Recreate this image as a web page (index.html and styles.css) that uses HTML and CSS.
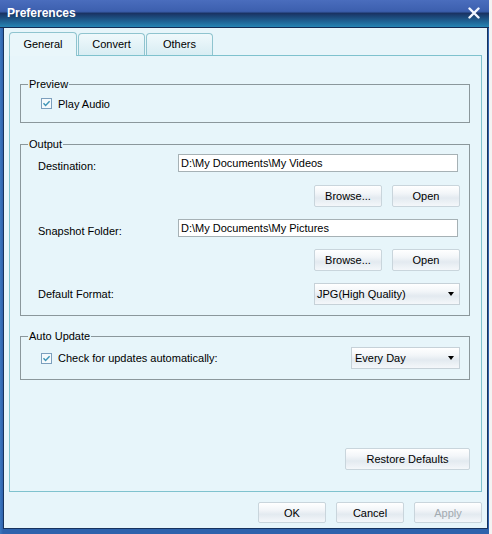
FILE: index.html
```html
<!DOCTYPE html>
<html>
<head>
<meta charset="utf-8">
<title>Preferences</title>
<link rel="stylesheet" href="styles.css">
</head>
<body>
<div class="window">
  <div class="titlebar">
    <span class="title">Preferences</span>
    <svg class="close" width="12" height="12" viewBox="0 0 12 12"><path d="M1.5 1.5 L10.5 10.5 M10.5 1.5 L1.5 10.5" stroke="#f2f6ff" stroke-width="2.4" stroke-linecap="round"/></svg>
  </div>
  <div class="frame">
    <div class="client">
      <div class="tabs">
        <div class="tab active">General</div>
        <div class="tab">Convert</div>
        <div class="tab">Others</div>
      </div>
      <div class="panel">
        <fieldset class="group preview">
          <legend>Preview</legend>
          <div class="check-row">
            <span class="box"><svg width="9" height="9" viewBox="0 0 9 9"><path d="M1.5 4.2 L3.6 6.4 L7.6 2.2" fill="none" stroke="#3d94b6" stroke-width="1.4"/></svg></span>
            <span>Play Audio</span>
          </div>
        </fieldset>
        <fieldset class="group output">
          <legend>Output</legend>
          <div class="out-grid">
            <span class="lbl lbl-top">Destination:</span>
            <div class="field first">D:\My Documents\My Videos</div>
            <div class="btns"><button class="btn">Browse...</button><button class="btn">Open</button></div>
            <span class="lbl lbl-top">Snapshot Folder:</span>
            <div class="field">D:\My Documents\My Pictures</div>
            <div class="btns"><button class="btn">Browse...</button><button class="btn">Open</button></div>
            <span class="lbl lbl-mid">Default Format:</span>
            <div class="select format"><span>JPG(High Quality)</span><span class="arrow"></span></div>
          </div>
        </fieldset>
        <fieldset class="group update">
          <legend>Auto Update</legend>
          <div class="update-row">
            <span class="box"><svg width="9" height="9" viewBox="0 0 9 9"><path d="M1.5 4.2 L3.6 6.4 L7.6 2.2" fill="none" stroke="#3d94b6" stroke-width="1.4"/></svg></span>
            <span>Check for updates automatically:</span>
            <div class="select every"><span>Every Day</span><span class="arrow"></span></div>
          </div>
        </fieldset>
        <div class="restore-row"><button class="btn restore">Restore Defaults</button></div>
      </div>
      <div class="footer">
        <button class="btn foot">OK</button>
        <button class="btn foot">Cancel</button>
        <button class="btn foot disabled">Apply</button>
      </div>
    </div>
  </div>
</div>
</body>
</html>
```
FILE: styles.css
```css
* { box-sizing: border-box; }
html, body { margin: 0; padding: 0; }
body {
  width: 492px;
  height: 534px;
  overflow: hidden;
  background: #f3f3f3;
  font-family: "Liberation Sans", Arial, sans-serif;
  font-size: 11px;
  color: #000;
}
.window {
  width: 489px;
  height: 534px;
  display: flex;
  flex-direction: column;
  background: #2f63ad;
}
.titlebar {
  flex: none;
  height: 28px;
  border-bottom: 1px solid #142d55;
  background: linear-gradient(to bottom, #4a6dbd 0%, #3c5fae 42%, #1a3464 50%, #1c4a7c 64%, #2684b3 100%);
  display: flex;
  align-items: center;
  justify-content: space-between;
  padding: 0 9px 1px 7px;
}
.title {
  color: #fff;
  font-weight: bold;
  font-size: 12px;
  line-height: 14px;
}
.close { display: block; }
.frame {
  flex: 1;
  display: flex;
  padding: 0 1px 5px 3px;
  background: linear-gradient(to right, #3b77c0 0, #2e62ac 3px);
}
.client {
  flex: 1;
  display: flex;
  flex-direction: column;
  background: #e7f5fa;
  border: 1px solid #17335e;
  border-top: none;
  padding: 0 5px;
}
.tabs {
  position: relative;
  z-index: 1;
  height: 27px;
  display: flex;
  align-items: flex-end;
}
.tab {
  width: 67px;
  height: 22px;
  margin-left: 1px;
  border: 1px solid #8fc4cf;
  border-bottom: none;
  border-radius: 4px 4px 0 0;
  background: linear-gradient(to bottom, #f0f9fc, #d8edf3);
  display: flex;
  align-items: center;
  justify-content: center;
  line-height: 13px;
}
.tab.active {
  width: 68px;
  height: 24px;
  margin: 0 0 -1px 0;
  background: #e9f6fa;
}
.panel {
  height: 437px;
  border: 1px solid #7fc2ce;
  background: #e7f5fa;
  padding: 22px 11px 21px 10px;
  display: flex;
  flex-direction: column;
}
.group {
  margin: 0;
  min-width: 0;
  border: 1px solid #8b979b;
  padding: 0 0 12px 7px;
}
.group legend {
  padding: 0 1px;
  line-height: 13px;
}
.check-row, .update-row {
  display: flex;
  align-items: center;
}
.check-row {
  height: 13px;
  margin-top: 6px;
  padding-left: 13px;
}
.box {
  width: 11px;
  height: 11px;
  margin-right: 6px;
  border: 1px solid #7c9fbd;
  background: #f5fafc;
  display: flex;
}
.output { margin-top: 15px; padding-bottom: 10px; }
.out-grid {
  margin-top: 3px;
  padding: 0 9px 0 10px;
  display: grid;
  grid-template-columns: 140px 282px;
  row-gap: 12px;
}
.lbl { line-height: 13px; }
.lbl-top { padding-top: 6px; grid-row: span 2; }
.lbl-mid { align-self: center; }
.field {
  width: 280px;
  height: 18px;
  border: 1px solid #a6b1b5;
  background: #fff;
  padding: 0 2px;
  line-height: 16px;
  white-space: nowrap;
}
.field.first { margin-bottom: 1px; }
.btns {
  grid-column: 2;
  display: flex;
  justify-content: flex-end;
  gap: 10px;
}
.btn {
  font-family: "Liberation Sans", Arial, sans-serif;
  font-size: 11px;
  color: #000;
  width: 68px;
  height: 22px;
  padding: 0;
  border: 1px solid #c9d5dc;
  border-radius: 2px;
  background: linear-gradient(to bottom, #ffffff 0%, #f3f6f9 35%, #e3eaf0 60%, #f4f7fa 100%);
}
.select {
  height: 22px;
  border: 1px solid #c6d1d8;
  background: linear-gradient(to bottom, #ffffff 0%, #f3f6f9 35%, #e3eaf0 60%, #f4f7fa 100%);
  display: flex;
  align-items: center;
  justify-content: space-between;
  padding: 0 5px 0 2px;
}
.format { grid-column: 2; width: 146px; justify-self: end; }
.arrow {
  width: 0;
  height: 0;
  border-left: 3.5px solid transparent;
  border-right: 3.5px solid transparent;
  border-top: 4px solid #000;
}
.update { margin-top: 14px; padding-bottom: 10px; }
.update-row {
  height: 22px;
  margin-top: 4px;
  padding: 0 9px 0 13px;
}
.every { width: 109px; margin-left: auto; padding-left: 3px; }
.restore-row {
  margin-top: auto;
  display: flex;
  justify-content: flex-end;
}
.restore { width: 125px; }
.footer {
  padding-top: 10px;
  display: flex;
  justify-content: flex-end;
  gap: 10px;
}
.foot { height: 21px; }
.disabled { color: #a2aab0; }
```
